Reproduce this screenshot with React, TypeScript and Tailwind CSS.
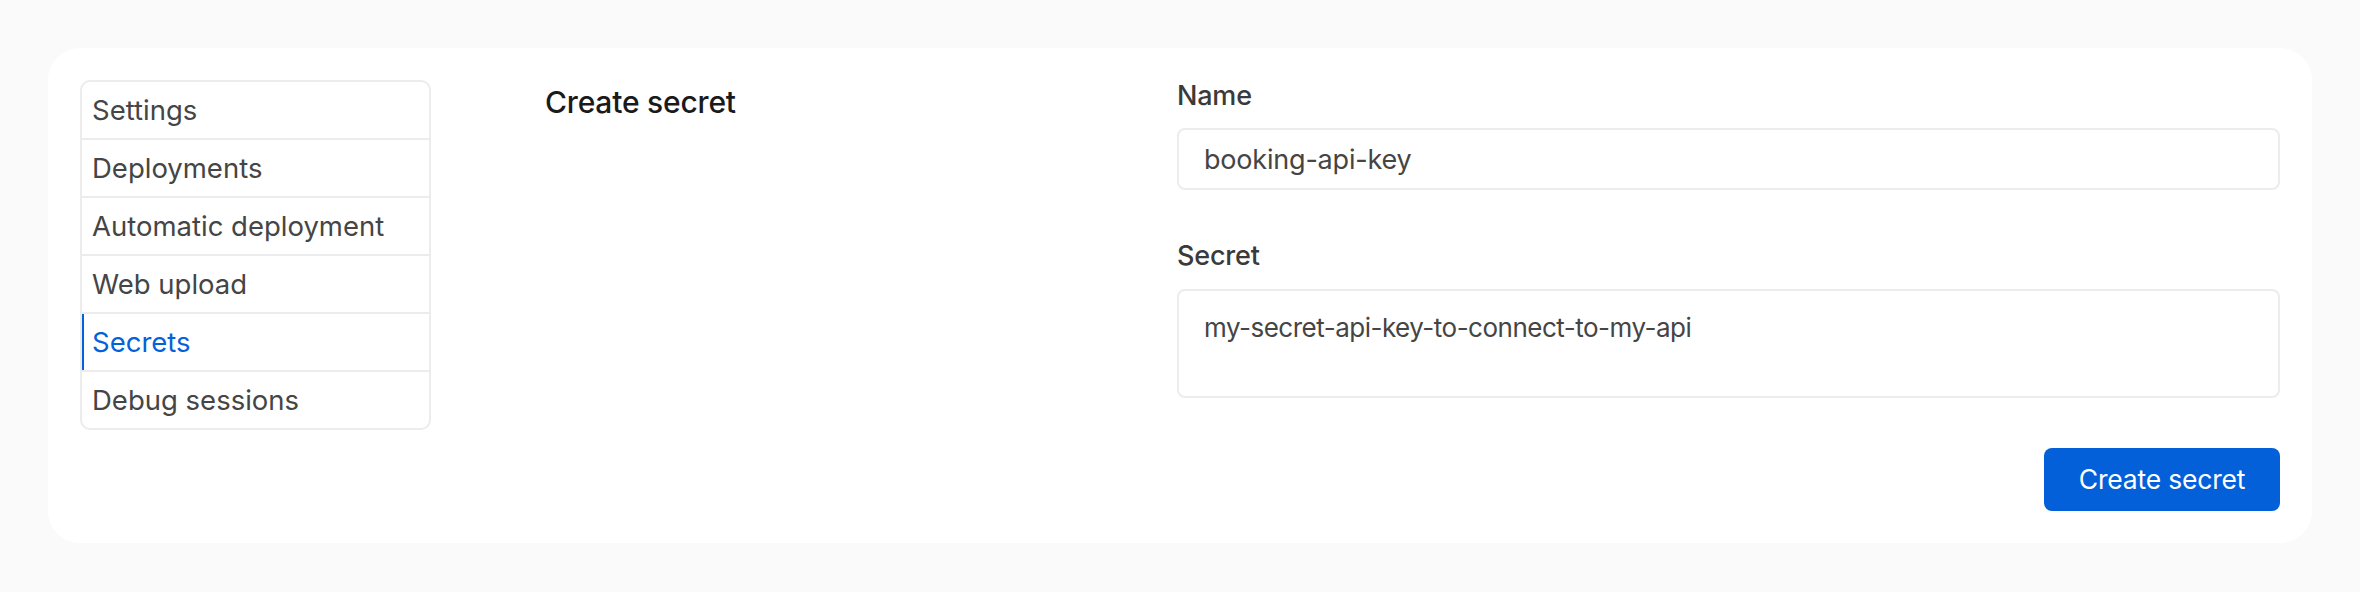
import React from "react";

const items = [
  "Settings",
  "Deployments",
  "Automatic deployment",
  "Web upload",
  "Secrets",
  "Debug sessions",
];

export default function App() {
  return (
    <div
      className="min-h-[592px] bg-[#fafafa] p-[48px]"
      style={{ fontFamily: "Inter, 'Noto Sans', sans-serif" }}
    >
      <div className="flex rounded-[32px] bg-white p-[32px]">
        <nav className="w-[351px] shrink-0 self-start overflow-hidden rounded-[10px] border-2 border-[#ececec]">
          {items.map((item, i) => {
            const active = item === "Secrets";
            return (
              <div
                key={item}
                className={
                  i > 0
                    ? "flex h-[58px] items-center border-t-2 border-[#ececec]"
                    : "flex h-[56px] items-center"
                }
              >
                <div
                  className={
                    active
                      ? "flex h-full w-full items-center border-l-2 border-[#0561d9] pl-[8px] text-[27.5px] leading-[32px] text-[#0561d9]"
                      : "flex h-full w-full items-center pl-[10px] text-[27.5px] leading-[32px] text-[#454545]"
                  }
                >
                  {item}
                </div>
              </div>
            );
          })}
        </nav>

        <div className="flex flex-1 pl-[114px]">
          <div className="w-[632px] shrink-0 pt-[4px]">
            <h2 className="text-[30px] font-medium leading-[36px] tracking-[-0.2px] text-[#1a1a1a]">
              Create secret
            </h2>
          </div>

          <div className="flex flex-1 flex-col">
            <label className="text-[27px] font-medium leading-[32px] tracking-[-0.2px] text-[#3a3a3a]">
              Name
            </label>
            <input
              readOnly
              value="booking-api-key"
              className="mt-[16px] h-[62px] w-full rounded-[8px] border-2 border-[#ececec] bg-white px-[25px] text-[27px] tracking-[-0.2px] text-[#454545] outline-none"
            />

            <label className="mt-[50px] text-[27px] font-medium leading-[32px] tracking-[-0.2px] text-[#3a3a3a]">
              Secret
            </label>
            <textarea
              readOnly
              value="my-secret-api-key-to-connect-to-my-api"
              className="mt-[17px] h-[109px] w-full resize-none rounded-[8px] border-2 border-[#ececec] bg-white px-[25px] pt-[21px] text-[26px] leading-[32px] tracking-[-0.5px] text-[#454545] outline-none"
            />

            <div className="mt-[50px] flex justify-end">
              <button className="h-[63px] w-[236px] rounded-[8px] bg-[#0360d9] text-[26.5px] tracking-[-0.2px] text-white">
                Create secret
              </button>
            </div>
          </div>
        </div>
      </div>
    </div>
  );
}
